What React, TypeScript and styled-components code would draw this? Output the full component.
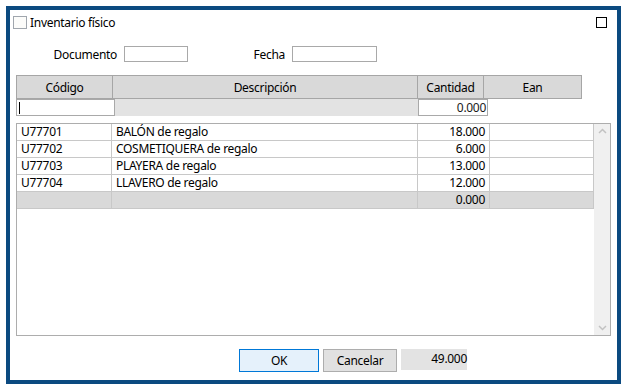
import styled, { createGlobalStyle } from "styled-components";

const Global = createGlobalStyle`
  html, body {
    margin: 0;
    padding: 0;
    background: #ffffff;
  }
  body {
    font-family: "Noto Sans", "Open Sans", sans-serif;
    font-size: 12px;
    color: #000;
  }
`;

const Frame = styled.div`
  box-sizing: border-box;
  width: 615px;
  height: 378px;
  margin: 6px 0 0 6px;
  border: 4px solid #0b4a80;
  background: #fff;
  display: flex;
  flex-direction: column;
`;

const TitleBar = styled.div`
  box-sizing: border-box;
  height: 24px;
  padding: 0 10px 0 3px;
  display: flex;
  align-items: center;
`;

const TitleCheck = styled.span`
  box-sizing: border-box;
  width: 14px;
  height: 13px;
  border: 1px solid #a0a6ad;
  background: #fcfcfa;
  margin-right: 3px;
`;

const TitleText = styled.span`
  flex: 1;
  letter-spacing: -0.3px;
`;

const CloseBox = styled.span`
  box-sizing: border-box;
  width: 11px;
  height: 11px;
  border: 1px solid #000;
`;

const FormRow = styled.div`
  display: flex;
  align-items: center;
  height: 16px;
  margin-top: 12px;
`;

const Label = styled.span<{ $w: number }>`
  width: ${(p) => p.$w}px;
  text-align: right;
  padding-right: 7px;
  box-sizing: border-box;
  letter-spacing: -0.3px;
`;

const Field = styled.div<{ $w: number }>`
  box-sizing: border-box;
  width: ${(p) => p.$w}px;
  height: 16px;
  border: 1px solid #a9a9a9;
`;

const Table = styled.div`
  margin: 13px 0 0 6px;
`;

const HeaderRow = styled.div`
  display: flex;
  height: 24px;
`;

const HeadCell = styled.div<{ $w: number }>`
  box-sizing: border-box;
  width: ${(p) => p.$w}px;
  height: 24px;
  background: #d9d9d9;
  border: 1px solid #a6a6a6;
  margin-right: -1px;
  display: flex;
  align-items: center;
  justify-content: center;
  letter-spacing: -0.3px;
`;

const EntryRow = styled.div`
  display: flex;
  height: 17px;
`;

const EntryInput = styled.div<{ $w: number; $right?: boolean }>`
  box-sizing: border-box;
  width: ${(p) => p.$w}px;
  height: 17px;
  border: 1px solid #a9a9a9;
  background: #fff;
  padding: 0 1px;
  color: #1a1a1a;
  letter-spacing: -0.3px;
  display: flex;
  align-items: center;
  justify-content: ${(p) => (p.$right ? "flex-end" : "flex-start")};
`;

const Caret = styled.span`
  width: 1px;
  height: 12px;
  background: #000;
  margin-left: 1px;
`;

const EntryGray = styled.div<{ $w: number }>`
  width: ${(p) => p.$w}px;
  height: 17px;
  background: #e3e3e3;
`;

const Grid = styled.div`
  box-sizing: border-box;
  margin: 7px 0 0 6px;
  width: 595px;
  height: 213px;
  border: 1px solid #adadad;
  display: flex;
`;

const Rows = styled.div`
  flex: 1;
`;

const Row = styled.div<{ $total?: boolean }>`
  display: flex;
  height: 17px;
  border-bottom: 1px solid #c8c8c8;
  box-sizing: border-box;
  background: ${(p) => (p.$total ? "#d9d9d9" : "#fff")};
`;

const Cell = styled.div<{ $w: number; $right?: boolean }>`
  box-sizing: border-box;
  width: ${(p) => p.$w}px;
  border-right: 1px solid #c8c8c8;
  padding: 0 4px;
  line-height: 16px;
  text-align: ${(p) => (p.$right ? "right" : "left")};
  letter-spacing: -0.3px;
  white-space: nowrap;
  overflow: hidden;
`;

const ScrollBar = styled.div`
  width: 17px;
  background: #f0f0f0;
  display: flex;
  flex-direction: column;
  justify-content: space-between;
  align-items: center;
  padding: 4px 0;
`;

const Footer = styled.div`
  display: flex;
  align-items: flex-start;
  margin: 13px 0 0 229px;
`;

const Button = styled.div<{ $primary?: boolean }>`
  box-sizing: border-box;
  height: 23px;
  width: ${(p) => (p.$primary ? 80 : 74)}px;
  border: 1px solid ${(p) => (p.$primary ? "#0078d7" : "#adadad")};
  background: ${(p) => (p.$primary ? "#e5f1fb" : "#e1e1e1")};
  display: flex;
  align-items: center;
  justify-content: center;
  margin-right: 4px;
  letter-spacing: -0.3px;
`;

const Total = styled.div`
  box-sizing: border-box;
  width: 66px;
  height: 21px;
  background: #e3e3e3;
  text-align: right;
  line-height: 19px;
  letter-spacing: -0.3px;
`;

const Chevron = ({ up }: { up?: boolean }) => (
  <svg width="9" height="6" viewBox="0 0 9 6">
    <path
      d={up ? "M1 5 L4.5 1.5 L8 5" : "M1 1 L4.5 4.5 L8 1"}
      fill="none"
      stroke="#c2c2c2"
      strokeWidth="1.5"
    />
  </svg>
);

const cols = [95, 306, 72, 104];

const items = [
  ["U77701", "BALÓN de regalo", "18.000"],
  ["U77702", "COSMETIQUERA de regalo", "6.000"],
  ["U77703", "PLAYERA de regalo", "13.000"],
  ["U77704", "LLAVERO de regalo", "12.000"],
];

export default function App() {
  return (
    <>
      <Global />
      <Frame>
        <TitleBar>
          <TitleCheck />
          <TitleText>Inventario físico</TitleText>
          <CloseBox />
        </TitleBar>
        <FormRow>
          <Label $w={114}>Documento</Label>
          <Field $w={64} />
          <Label $w={104}>Fecha</Label>
          <Field $w={85} />
        </FormRow>
        <Table>
          <HeaderRow>
            <HeadCell $w={97}>Código</HeadCell>
            <HeadCell $w={306}>Descripción</HeadCell>
            <HeadCell $w={67}>Cantidad</HeadCell>
            <HeadCell $w={99}>Ean</HeadCell>
          </HeaderRow>
          <EntryRow>
            <EntryInput $w={99}>
              <Caret />
            </EntryInput>
            <EntryGray $w={303} />
            <EntryInput $w={70} $right>
              0.000
            </EntryInput>
          </EntryRow>
        </Table>
        <Grid>
          <Rows>
            {items.map((it) => (
              <Row key={it[0]}>
                <Cell $w={cols[0]}>{it[0]}</Cell>
                <Cell $w={cols[1]}>{it[1]}</Cell>
                <Cell $w={cols[2]} $right>
                  {it[2]}
                </Cell>
                <Cell $w={cols[3]} />
              </Row>
            ))}
            <Row $total>
              <Cell $w={cols[0]} />
              <Cell $w={cols[1]} />
              <Cell $w={cols[2]} $right>
                0.000
              </Cell>
              <Cell $w={cols[3]} />
            </Row>
          </Rows>
          <ScrollBar>
            <Chevron up />
            <Chevron />
          </ScrollBar>
        </Grid>
        <Footer>
          <Button $primary>OK</Button>
          <Button>Cancelar</Button>
          <Total>49.000</Total>
        </Footer>
      </Frame>
    </>
  );
}
